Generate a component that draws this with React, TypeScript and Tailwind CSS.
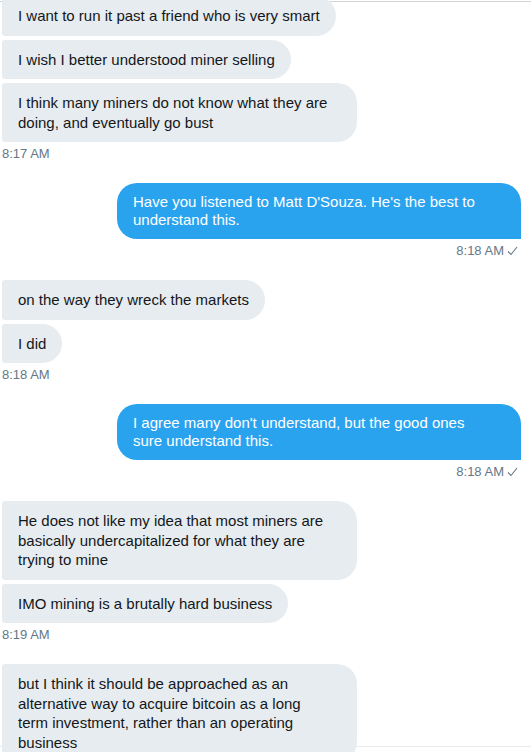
import React from 'react';

type Msg = {
    lines: string[];
    wide?: boolean;
}

type Group = {
    side: 'in' | 'out';
    time: string;
    messages: Msg[];
}

const GROUPS: Group[] = [
    {
        side: 'in',
        time: '8:17 AM',
        messages: [
            {lines: ['I want to run it past a friend who is very smart']},
            {lines: ['I wish I better understood miner selling']},
            {lines: ['I think many miners do not know what they are', 'doing, and eventually go bust'], wide: true},
        ],
    },
    {
        side: 'out',
        time: '8:18 AM',
        messages: [
            {lines: ["Have you listened to Matt D'Souza. He's the best to", 'understand this.'], wide: true},
        ],
    },
    {
        side: 'in',
        time: '8:18 AM',
        messages: [
            {lines: ['on the way they wreck the markets']},
            {lines: ['I did']},
        ],
    },
    {
        side: 'out',
        time: '8:18 AM',
        messages: [
            {lines: ["I agree many don't understand, but the good ones", 'sure understand this.'], wide: true},
        ],
    },
    {
        side: 'in',
        time: '8:19 AM',
        messages: [
            {lines: ['He does not like my idea that most miners are', 'basically undercapitalized for what they are', 'trying to mine'], wide: true},
            {lines: ['IMO mining is a brutally hard business']},
        ],
    },
    {
        side: 'in',
        time: '',
        messages: [
            {lines: ['but I think it should be approached as an', 'alternative way to acquire bitcoin as a long', 'term investment, rather than an operating', 'business'], wide: true},
        ],
    },
];

const Check = () => (
    <svg width="11" height="10" viewBox="0 0 11 10" className="ml-[3px]">
        <path d="M1 5.5 L4 8.5 L10 1" fill="none" stroke="#657786" strokeWidth="1.1"/>
    </svg>
)

const Bubble = ({msg, side}: {msg: Msg, side: 'in' | 'out'}) => {
    if (side === 'out') {
        return (
            <div className={'px-4 py-[10px] text-[15px] leading-[18px] whitespace-nowrap bg-[#2aa3ef] text-white rounded-t-[20px] rounded-bl-[20px] rounded-br-none ' + (msg.wide ? 'w-[404px]' : '')}>
                {msg.lines.map((l, i) => <div key={i}>{l}</div>)}
            </div>
        )
    }
    return (
        <div className={'px-4 py-[10px] text-[15px] leading-[19.5px] whitespace-nowrap bg-[#e6ecf0] text-[#14171a] rounded-l-[3px] rounded-r-[20px] ' + (msg.wide ? 'w-[355px]' : '')}>
            {msg.lines.map((l, i) => <div key={i}>{l}</div>)}
        </div>
    )
}

const App = () => {
    return (
        <div className="w-[531px] h-[752px] overflow-hidden bg-white" style={{fontFamily: '"Liberation Sans", Arial, sans-serif'}}>
            <div className="mt-px h-[746px] border-t border-t-[#cfd4d9] border-b border-b-[#e6ecf0]">
                <div className="-mt-[6px] pl-[2px] pr-[10px] flex flex-col">
                    {GROUPS.map((g, gi) => (
                        <div key={gi} className={'flex flex-col gap-[4px] ' + (g.side === 'out' ? 'items-end' : 'items-start')}>
                            {g.messages.map((m, mi) => <Bubble key={mi} msg={m} side={g.side}/>)}
                            {g.time && (
                                <div className={'flex items-center text-[13px] leading-[16px] text-[#657786] mb-[21px] ' + (g.side === 'out' ? 'pr-[3px]' : '')}>
                                    {g.time}
                                    {g.side === 'out' && <Check/>}
                                </div>
                            )}
                        </div>
                    ))}
                </div>
            </div>
        </div>
    )
}

export default App;
